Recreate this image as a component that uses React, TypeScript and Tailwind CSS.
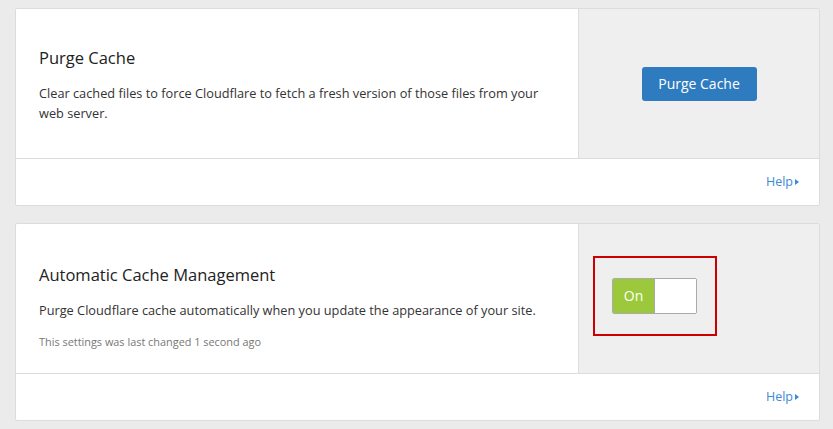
import React from 'react';

const font = { fontFamily: '"Open Sans", "Noto Sans", sans-serif' };

const HelpLink: React.FC = () => (
  <a href="#" className="flex items-center text-[12.5px] text-[#3b8ad3] no-underline">
    Help
    <span className="ml-[2px] inline-block w-0 h-0 border-y-[3.5px] border-y-transparent border-l-[4px] border-l-[#3b8ad3]" />
  </a>
);

interface CardProps {
  title: string;
  description: string;
  note?: string;
  padTop: string;
  action: React.ReactNode;
}

const SettingCard: React.FC<CardProps> = ({ title, description, note, padTop, action }) => (
  <div className="bg-white border border-[#dcdcdc] rounded-[2px]">
    <div className="flex h-[149px]">
      <div className={`flex-1 flex flex-col px-[23px] ${padTop}`}>
        <h3 className="text-[16.5px] text-[#222] leading-[24px]">{title}</h3>
        <p className="mt-[13px] text-[12.75px] text-[#333] leading-[20px] max-w-[510px]">{description}</p>
        {note && <p className="mt-[14px] text-[10.9px] text-[#777] leading-[16px]">{note}</p>}
      </div>
      <div className="w-[241px] bg-[#efefef] border-l border-[#dcdcdc] flex items-center pb-[6px]">
        {action}
      </div>
    </div>
    <div className="h-[47px] border-t border-[#dcdcdc] flex items-center justify-end pr-[20px]">
      <HelpLink />
    </div>
  </div>
);

export default function App() {
  return (
    <div className="min-h-screen bg-[#ebebeb] pt-[8px] pl-[15px]" style={font}>
      <div className="flex flex-col gap-[17px] w-[805px]">
        <SettingCard
          title="Purge Cache"
          padTop="pt-[37px]"
          description="Clear cached files to force Cloudflare to fetch a fresh version of those files from your web server."
          action={
            <div className="w-full flex justify-center pt-[6px]">
              <button className="h-[34px] w-[115px] rounded-[3px] bg-[#2f7bbf] text-white text-[14px]">
                Purge Cache
              </button>
            </div>
          }
        />
        <SettingCard
          title="Automatic Cache Management"
          padTop="pt-[39px]"
          description="Purge Cloudflare cache automatically when you update the appearance of your site."
          note="This settings was last changed 1 second ago"
          action={
            <div className="ml-[14px] border-2 border-[#cc0000] pl-[17px] pr-[18px] py-[20px]">
              <div className="flex w-[85px] h-[36px] border border-[#aaa] rounded-[2px] overflow-hidden">
                <div className="w-[42px] bg-[#9cc83c] border-r border-[#aaa] flex items-center justify-center text-white text-[14px]">
                  On
                </div>
                <div className="flex-1 bg-white" />
              </div>
            </div>
          }
        />
      </div>
    </div>
  );
}
